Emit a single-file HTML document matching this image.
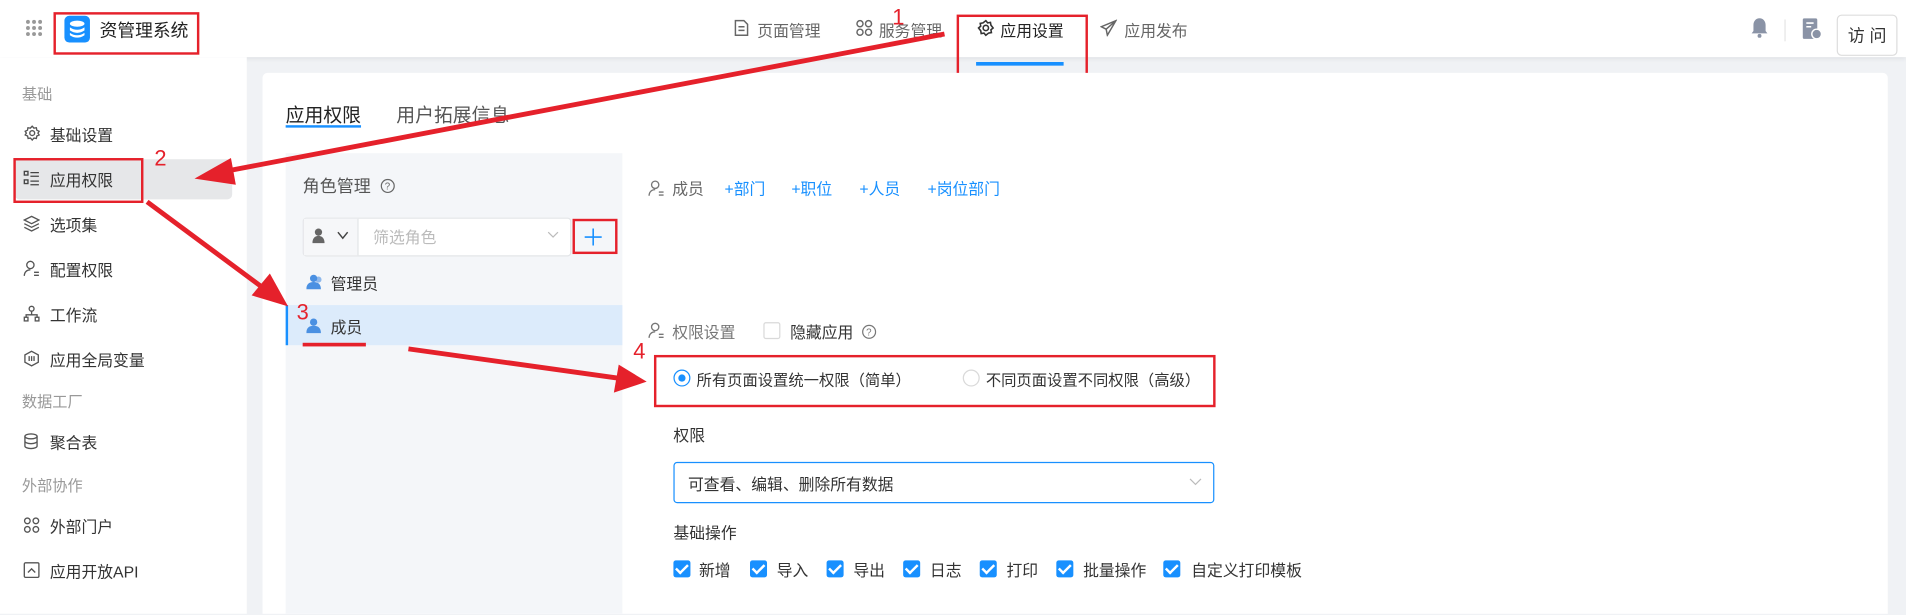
<!DOCTYPE html>
<html><head><meta charset="utf-8"><style>
*{margin:0;padding:0;box-sizing:border-box}
html,body{width:1906px;height:615px;overflow:hidden;background:#f0f2f5}
body{font-family:"Liberation Sans","Noto Sans CJK SC",sans-serif;color:#333;font-size:13px}
#w{position:absolute;left:0;top:0;width:1568px;height:505px;transform:scale(1.21556);transform-origin:0 0;background:#f0f2f5;overflow:hidden}
.a{position:absolute;white-space:nowrap}
.top{position:absolute;left:0;top:0;width:1568px;height:47px;background:#fff;box-shadow:0 1px 4px rgba(0,0,0,.08)}
.side{position:absolute;left:0;top:47px;width:203px;height:458px;background:#fff}
.card{position:absolute;left:216px;top:60px;width:1337px;height:445px;background:#fff;border-radius:4px 4px 0 0}
.si{font-size:13px;color:#333}
.lab{font-size:12.5px;color:#999}
.nav{font-size:13px;color:#666}
.blue{color:#1890ff}
.cb{position:absolute;width:14px;height:14px;background:#1890ff;border-radius:2px}
.cb:after{content:"";position:absolute;left:4px;top:1px;width:4px;height:8px;border:solid #fff;border-width:0 2px 2px 0;transform:rotate(45deg)}
.red{position:absolute;border:2px solid #e5212b}
.rn{position:absolute;color:#e5212b;font-size:18px}
</style></head><body><div id="w">
<div class="top"></div>
<svg class="a" style="left:21px;top:16px" width="14" height="14" fill="#999"><circle cx="2" cy="2" r="1.6"/><circle cx="7" cy="2" r="1.6"/><circle cx="12" cy="2" r="1.6"/><circle cx="2" cy="7" r="1.6"/><circle cx="7" cy="7" r="1.6"/><circle cx="12" cy="7" r="1.6"/><circle cx="2" cy="12" r="1.6"/><circle cx="7" cy="12" r="1.6"/><circle cx="12" cy="12" r="1.6"/></svg>
<div class="a" style="left:53px;top:13px;width:21px;height:22px;background:#1890ff;border-radius:4px"></div>
<svg class="a" style="left:56px;top:16px" width="15" height="16"><ellipse cx="7.5" cy="3.5" rx="6" ry="2.5" fill="#fff"/><path d="M1.5 6.5q6 4 12 0v2.5q-6 4-12 0z M1.5 11q6 4 12 0v2q-6 4-12 0z" fill="#fff"/></svg>
<div class="a" style="left:82px;top:14px;font-size:14.6px;color:#222">资管理系统</div>
<div class="red" style="left:44px;top:10px;width:120px;height:35px"></div>
<svg class="a" style="left:604px;top:16px" width="12" height="14" fill="none" stroke="#666" stroke-width="1.2"><path d="M1 1h7l3 3v9H1z M3.5 6h5 M3.5 9h5"/></svg>
<div class="a nav" style="left:623px;top:15px">页面管理</div>
<svg class="a" style="left:704px;top:16px" width="14" height="14" fill="none" stroke="#666" stroke-width="1.2"><circle cx="3.5" cy="3.5" r="2.5"/><circle cx="10.5" cy="3.5" r="2.5"/><circle cx="3.5" cy="10.5" r="2.5"/><circle cx="10.5" cy="10.5" r="2.5"/></svg>
<div class="a nav" style="left:723px;top:15px">服务管理</div>
<svg class="a" style="left:804px;top:16px" width="14" height="14" fill="none" stroke="#333" stroke-width="1.3"><circle cx="7" cy="7" r="2.2"/><path d="M7 1l1.5 1.8 2.3-.4.4 2.3L13 7l-1.8 1.5.4 2.3-2.3.4L7 13l-1.5-1.8-2.3.4-.4-2.3L1 7l1.8-1.5-.4-2.3 2.3-.4z"/></svg>
<div class="a" style="left:823px;top:15px;color:#222">应用设置</div>
<div class="a" style="left:803px;top:51px;width:72px;height:3px;background:#1890ff"></div>
<svg class="a" style="left:905px;top:16px" width="14" height="14" fill="none" stroke="#666" stroke-width="1.2"><path d="M13 1L1 6l4 2 1 5 7-12zM5 8l8-7"/></svg>
<div class="a nav" style="left:925px;top:15px">应用发布</div>
<svg class="a" style="left:1440px;top:14px" width="15" height="18" fill="#8a93a6"><path d="M7.5 1c3 0 5 2.5 5 5.5v5l1.5 2H1l1.5-2v-5C2.5 3.5 4.5 1 7.5 1z"/><circle cx="7.5" cy="15.5" r="1.6"/></svg>
<div class="a" style="left:1468px;top:16px;width:1px;height:18px;background:#e5e5e5"></div>
<svg class="a" style="left:1483px;top:15px" width="16" height="18"><rect x="0" y="0" width="12" height="17" rx="1.5" fill="#8a93a6"/><path d="M3 4h6M3 7h4" stroke="#fff" stroke-width="1.3"/><circle cx="11.5" cy="13" r="4" fill="#8a93a6" stroke="#fff" stroke-width="1.2"/></svg>
<div class="a" style="left:1511px;top:12px;width:50px;height:34px;border:1px solid #ddd;border-radius:4px;font-size:14px;color:#333;text-align:center;line-height:32px">访 问</div>
<div class="red" style="left:787px;top:12px;width:108px;height:52px"></div>

<div class="side"></div>
<div class="a lab" style="left:18px;top:67px">基础</div>
<div class="a" style="left:12px;top:131px;width:179px;height:33px;background:#e6e7e9;border-radius:4px"></div>
<svg class="a" style="left:20px;top:103px" width="13" height="13" fill="none" stroke="#555" stroke-width="1.1"><circle cx="6.5" cy="6.5" r="2"/><path d="M6.5 .8l1.4 1.6 2-.3.4 2 1.9.9-1 1.5 1 1.5-1.9.9-.4 2-2-.3-1.4 1.6-1.4-1.6-2 .3-.4-2L.7 8l1-1.5-1-1.5 1.9-.9.4-2 2 .3z"/></svg>
<div class="a si" style="left:41px;top:101px">基础设置</div>
<svg class="a" style="left:19px;top:140px" width="14" height="13" fill="none" stroke="#444" stroke-width="1.1"><rect x="1" y="1" width="3" height="3"/><rect x="1" y="8" width="3" height="3"/><path d="M6 2h7M6 5h7M6 9h7M6 12h7"/></svg>
<div class="a si" style="left:41px;top:138px">应用权限</div>
<svg class="a" style="left:19px;top:177px" width="14" height="14" fill="none" stroke="#555" stroke-width="1.1"><path d="M7 1l6 3-6 3-6-3z M1 7l6 3 6-3 M1 10l6 3 6-3"/></svg>
<div class="a si" style="left:41px;top:175px">选项集</div>
<svg class="a" style="left:19px;top:214px" width="14" height="14" fill="none" stroke="#555" stroke-width="1.1"><circle cx="6" cy="4" r="3"/><path d="M1 13c0-3 2-5 5-5M9 10h4M9 12.5h4"/></svg>
<div class="a si" style="left:41px;top:212px">配置权限</div>
<svg class="a" style="left:19px;top:251px" width="14" height="14" fill="none" stroke="#555" stroke-width="1.1"><circle cx="7" cy="3" r="2"/><rect x="1" y="10" width="3" height="3"/><rect x="10" y="10" width="3" height="3"/><path d="M7 5v3M2.5 10V8h9v2"/></svg>
<div class="a si" style="left:41px;top:249px">工作流</div>
<svg class="a" style="left:19px;top:288px" width="14" height="14" fill="none" stroke="#555" stroke-width="1.1"><path d="M7 1l5.5 3v6L7 13 1.5 10V4z M5 5v4M9 5v4M7 5v4"/></svg>
<div class="a si" style="left:41px;top:286px">应用全局变量</div>
<div class="a lab" style="left:18px;top:320px">数据工厂</div>
<svg class="a" style="left:19px;top:356px" width="13" height="14" fill="none" stroke="#555" stroke-width="1.1"><ellipse cx="6.5" cy="3" rx="5" ry="2"/><path d="M1.5 3v8c0 1 2 2 5 2s5-1 5-2V3M1.5 7c0 1 2 2 5 2s5-1 5-2"/></svg>
<div class="a si" style="left:41px;top:354px">聚合表</div>
<div class="a lab" style="left:18px;top:389px">外部协作</div>
<svg class="a" style="left:19px;top:425px" width="14" height="14" fill="none" stroke="#555" stroke-width="1.1"><circle cx="3.5" cy="3.5" r="2.3"/><circle cx="10.5" cy="3.5" r="2.3"/><circle cx="3.5" cy="10.5" r="2.3"/><circle cx="10.5" cy="10.5" r="2.3"/></svg>
<div class="a si" style="left:41px;top:423px">外部门户</div>
<svg class="a" style="left:19px;top:462px" width="14" height="14" fill="none" stroke="#555" stroke-width="1.1"><rect x="1" y="1" width="12" height="12" rx="1"/><path d="M4 9l3-3 3 3"/></svg>
<div class="a si" style="left:41px;top:460px">应用开放API</div>
<div class="red" style="left:11px;top:130px;width:107px;height:37px"></div>

<div class="card"></div>
<div class="a" style="left:235px;top:83px;font-size:15.5px;color:#222">应用权限</div>
<div class="a" style="left:235px;top:103px;width:62px;height:2px;background:#1890ff"></div>
<div class="a" style="left:326px;top:83px;font-size:15.5px;color:#555">用户拓展信息</div>

<div class="a" style="left:235px;top:126px;width:277px;height:379px;background:#f4f6f9"></div>
<div class="a" style="left:249px;top:143px;font-size:14px;color:#555">角色管理</div>
<svg class="a" style="left:313px;top:147px" width="12" height="12" fill="none" stroke="#666"><circle cx="6" cy="6" r="5.3"/><text x="3.5" y="9" font-size="8" fill="#666" stroke="none" font-family="Liberation Sans">?</text></svg>
<div class="a" style="left:249px;top:179px;width:221px;height:32px;background:#fff;border:1px solid #e3e5e8;border-radius:3px"></div>
<div class="a" style="left:250px;top:180px;width:45px;height:30px;background:#f6f7f9;border-right:1px solid #e3e5e8"></div>
<svg class="a" style="left:257px;top:187px" width="12" height="14" fill="#666"><circle cx="5" cy="4" r="3"/><path d="M0 13c0-4 2-6 5-6s5 2 5 6z"/></svg>
<svg class="a" style="left:277px;top:190px" width="10" height="7" fill="none" stroke="#444" stroke-width="1.2"><path d="M1 1l4 5 4-5"/></svg>
<div class="a" style="left:307px;top:185px;font-size:13px;color:#bbb">筛选角色</div>
<svg class="a" style="left:450px;top:190px" width="10" height="7" fill="none" stroke="#bbb"><path d="M1 1l4 4 4-4"/></svg>
<svg class="a" style="left:480px;top:187px" width="16" height="16" stroke="#1890ff" stroke-width="1.3"><path d="M8 1v14M1 8h14"/></svg>
<div class="red" style="left:471px;top:180px;width:37px;height:29px"></div>
<svg class="a" style="left:252px;top:225px" width="14" height="14" fill="#4a90e2"><circle cx="6" cy="4" r="3"/><path d="M0 13c0-4 2-6 6-6s6 2 6 6z"/><circle cx="10" cy="5" r="2.5" opacity=".6"/></svg>
<div class="a si" style="left:272px;top:223px">管理员</div>
<div class="a" style="left:235px;top:251px;width:277px;height:33px;background:#dcebfb;border-left:2px solid #1890ff"></div>
<svg class="a" style="left:252px;top:261px" width="14" height="14" fill="#4a90e2"><circle cx="6" cy="4" r="3"/><path d="M0 13c0-4 2-6 6-6s6 2 6 6z"/></svg>
<div class="a si" style="left:272px;top:259px">成员</div>
<div class="a" style="left:249px;top:282px;width:52px;height:3px;background:#e5212b"></div>

<svg class="a" style="left:533px;top:148px" width="13" height="14" fill="none" stroke="#777" stroke-width="1.1"><circle cx="6" cy="4" r="3"/><path d="M1 13c0-3 2-5 5-5M9 10h4M9 12.5h4"/></svg>
<div class="a" style="left:553px;top:145px;color:#666">成员</div>
<div class="a blue" style="left:596px;top:145px">+部门</div>
<div class="a blue" style="left:651px;top:145px">+职位</div>
<div class="a blue" style="left:707px;top:145px">+人员</div>
<div class="a blue" style="left:763px;top:145px">+岗位部门</div>

<svg class="a" style="left:533px;top:265px" width="13" height="14" fill="none" stroke="#777" stroke-width="1.1"><circle cx="6" cy="4" r="3"/><path d="M1 13c0-3 2-5 5-5M9 10h4M9 12.5h4"/></svg>
<div class="a" style="left:553px;top:263px;color:#777">权限设置</div>
<div class="a" style="left:628px;top:265px;width:14px;height:14px;border:1px solid #d9d9d9;border-radius:2px;background:#fff"></div>
<div class="a" style="left:650px;top:263px;color:#333">隐藏应用</div>
<svg class="a" style="left:709px;top:267px" width="12" height="12" fill="none" stroke="#777"><circle cx="6" cy="6" r="5.3"/><text x="3.5" y="9" font-size="8" fill="#777" stroke="none" font-family="Liberation Sans">?</text></svg>
<div class="a" style="left:554px;top:304px;width:14px;height:14px;border:1px solid #1890ff;border-radius:50%"></div>
<div class="a" style="left:558px;top:308px;width:6px;height:6px;background:#1890ff;border-radius:50%"></div>
<div class="a" style="left:573px;top:302px;color:#333;font-size:12.6px">所有页面设置统一权限（简单）</div>
<div class="a" style="left:792px;top:304px;width:14px;height:14px;border:1px solid #d9d9d9;border-radius:50%"></div>
<div class="a" style="left:811px;top:302px;color:#333;font-size:12.6px">不同页面设置不同权限（高级）</div>
<div class="red" style="left:538px;top:292px;width:462px;height:43px"></div>
<div class="a" style="left:554px;top:348px;color:#333">权限</div>
<div class="a" style="left:554px;top:380px;width:445px;height:34px;border:1px solid #1890ff;border-radius:3px;background:#fff"></div>
<div class="a" style="left:566px;top:388px;color:#333">可查看、编辑、删除所有数据</div>
<svg class="a" style="left:978px;top:393px" width="11" height="7" fill="none" stroke="#bbb"><path d="M1 1l4.5 4.5L10 1"/></svg>
<div class="a" style="left:554px;top:428px;color:#333">基础操作</div>
<div class="cb" style="left:554px;top:461px"></div><div class="a" style="left:575px;top:459px">新增</div>
<div class="cb" style="left:617px;top:461px"></div><div class="a" style="left:639px;top:459px">导入</div>
<div class="cb" style="left:680px;top:461px"></div><div class="a" style="left:702px;top:459px">导出</div>
<div class="cb" style="left:743px;top:461px"></div><div class="a" style="left:765px;top:459px">日志</div>
<div class="cb" style="left:806px;top:461px"></div><div class="a" style="left:828px;top:459px">打印</div>
<div class="cb" style="left:869px;top:461px"></div><div class="a" style="left:891px;top:459px">批量操作</div>
<div class="cb" style="left:957px;top:461px"></div><div class="a" style="left:980px;top:459px">自定义打印模板</div>

<svg class="a" style="left:0;top:0" width="1568" height="505">
<g stroke="#e5212b" stroke-width="4" fill="#e5212b">
<line x1="777" y1="28" x2="185" y2="141"/><polygon points="160,147 190,130 194,152" stroke="none"/>
<line x1="121" y1="166" x2="218" y2="238"/><polygon points="237,252 207,243 222,225" stroke="none"/>
<line x1="336" y1="287" x2="508" y2="311"/><polygon points="532,314 505,323 509,300" stroke="none"/>
</g>
</svg>
<div class="rn" style="left:734px;top:4px">1</div>
<div class="rn" style="left:127px;top:120px">2</div>
<div class="rn" style="left:244px;top:247px">3</div>
<div class="rn" style="left:521px;top:279px">4</div>
</div></body></html>
